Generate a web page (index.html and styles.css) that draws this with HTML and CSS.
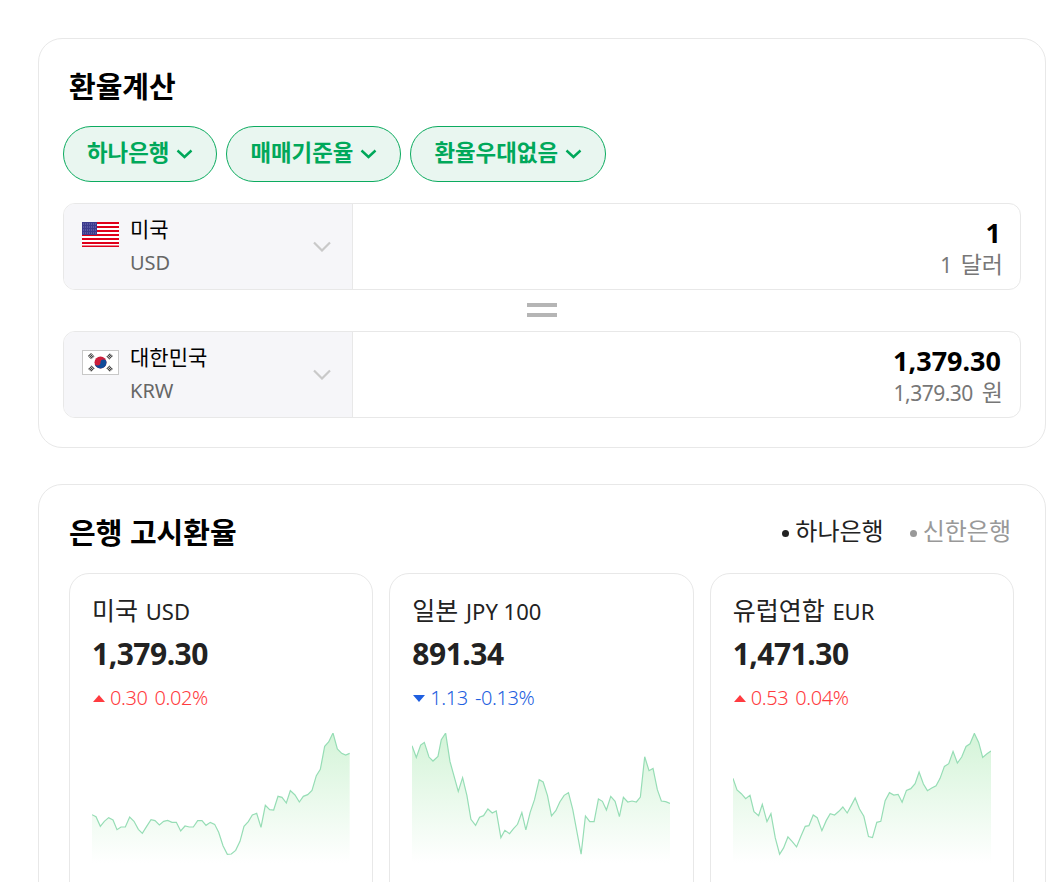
FILE: index.html
```html
<!DOCTYPE html>
<html lang="ko">
<head>
  <meta charset="UTF-8">
  <meta name="viewport" content="width=device-width, initial-scale=1.0">
  <title>환율계산</title>
  <link rel="stylesheet" href="styles.css">
</head>
<body>

  <svg class="defs" width="0" height="0" aria-hidden="true">
    <defs>
      <linearGradient id="spark-fill" x1="0" y1="0" x2="0" y2="1">
        <stop offset="0" stop-color="#d4f4d8"/>
        <stop offset="1" stop-color="#ffffff"/>
      </linearGradient>
    </defs>
  </svg>

  <!-- Calculator -->
  <section class="card calc">
    <h2 class="title calc-title">환율계산</h2>

    <div class="pills">
      <button class="pill">하나은행
        <svg class="pill-arrow" viewBox="0 0 17 10"><path d="M1.500 1.500 8.500 8l7-6.500"/></svg>
      </button>
      <button class="pill">매매기준율
        <svg class="pill-arrow" viewBox="0 0 17 10"><path d="M1.500 1.500 8.500 8l7-6.500"/></svg>
      </button>
      <button class="pill">환율우대없음
        <svg class="pill-arrow" viewBox="0 0 17 10"><path d="M1.500 1.500 8.500 8l7-6.500"/></svg>
      </button>
    </div>

    <div class="cur-row">
      <div class="cur-select">
        <svg class="flag" viewBox="0 0 37 25">
          <rect width="37" height="25" fill="#fff"/>
          <path d="M0 1h37M0 5h37M0 9h37M0 13h37M0 17h37M0 21h37M0 24.500h37" stroke="#e0001b" stroke-width="2"/>
          <rect width="15" height="13" fill="#3c3b8e"/>
          <path d="M1 2h13M1 5h13M1 8h13M1 11h13" stroke="#7b7ab8" stroke-width="1" stroke-dasharray="1 1"/>
        </svg>
        <div class="cur-name">
          <div class="cur-country">미국</div>
          <div class="cur-code">USD</div>
        </div>
        <svg class="cur-arrow" viewBox="0 0 18 11"><path d="M1 1.500l8 8 8-8"/></svg>
      </div>
      <div class="cur-value">
        <div class="cur-amount">1</div>
        <div class="cur-words"><span class="num">1</span> 달러</div>
      </div>
    </div>

    <div class="equals"></div>

    <div class="cur-row">
      <div class="cur-select">
        <svg class="flag" viewBox="0 0 37 25">
          <rect x=".5" y=".5" width="36" height="24" fill="#fff" stroke="#c8c8c8"/>
          <circle cx="18.500" cy="12.500" r="6" fill="#cd1f3c"/>
          <path d="M12.500 12.500a3 3 0 0 0 6 0 3 3 0 0 1 6 0 6 6 0 0 1-12 0z" fill="#0f4a99"/>
          <g fill="none" stroke="#333" stroke-width="4.500" stroke-dasharray="1 .6">
            <path d="M7.500 4.500 11 8M26 8l3.500-3.500M11 17l-3.500 3.500M26 17l3.500 3.500"/>
          </g>
        </svg>
        <div class="cur-name">
          <div class="cur-country">대한민국</div>
          <div class="cur-code">KRW</div>
        </div>
        <svg class="cur-arrow" viewBox="0 0 18 11"><path d="M1 1.500l8 8 8-8"/></svg>
      </div>
      <div class="cur-value">
        <div class="cur-amount">1,379.30</div>
        <div class="cur-words"><span class="num">1,379.30</span> 원</div>
      </div>
    </div>
  </section>

  <!-- Bank rates -->
  <section class="card rates">
    <div class="rates-head">
      <h2 class="title">은행 고시환율</h2>
      <ul class="banks">
        <li class="bank active">하나은행</li>
        <li class="bank">신한은행</li>
      </ul>
    </div>

    <div class="rate-grid">
      <div class="rate-card">
        <div class="rate-name"><span class="ko">미국</span> USD</div>
        <div class="rate-price">1,379.30</div>
        <div class="rate-change up"><span class="tri"></span><span>0.30</span><span>0.02%</span></div>
        <svg class="spark" viewBox="65 40 774 390">
          <polygon class="spark-area" points="65,430 65,285 77,291 90,320 102,305 115,294 128,301 140,330 152,322 165,322 178,292 191,305 204,329 216,341 229,320 242,300 254,303 267,316 280,305 292,302 305,308 318,308 331,334 344,319 357,322 369,322 382,303 395,303 407,317 420,308 433,314 445,338 458,378 471,404 483,403 496,392 509,365 521,320 534,306 546,286 559,281 572,323 585,257 598,270 610,271 623,230 635,233 648,250 660,213 674,226 687,247 699,230 712,225 725,212 738,168 750,149 763,80 775,67 788,40 801,88 814,101 826,106 838,101 838,430"/>
          <polyline class="spark-line" points="65,285 77,291 90,320 102,305 115,294 128,301 140,330 152,322 165,322 178,292 191,305 204,329 216,341 229,320 242,300 254,303 267,316 280,305 292,302 305,308 318,308 331,334 344,319 357,322 369,322 382,303 395,303 407,317 420,308 433,314 445,338 458,378 471,404 483,403 496,392 509,365 521,320 534,306 546,286 559,281 572,323 585,257 598,270 610,271 623,230 635,233 648,250 660,213 674,226 687,247 699,230 712,225 725,212 738,168 750,149 763,80 775,67 788,40 801,88 814,101 826,106 838,101"/>
        </svg>
      </div>

      <div class="rate-card">
        <div class="rate-name"><span class="ko">일본</span> JPY 100</div>
        <div class="rate-price">891.34</div>
        <div class="rate-change down"><span class="tri"></span><span>1.13</span><span>-0.13%</span></div>
        <svg class="spark" viewBox="67 40 775 390">
          <polygon class="spark-area" points="67,430 67,78 80,113 93,76 104,68 118,112 130,124 145,110 155,60 168,40 181,125 206,215 219,174 232,228 244,299 258,317 270,293 282,288 295,268 308,280 320,274 334,354 346,332 360,342 372,327 384,314 397,279 409,331 422,278 435,240 449,180 461,187 474,228 486,289 499,273 511,247 524,227 537,219 550,270 575,404 588,289 601,306 614,306 627,238 639,245 651,271 664,230 677,245 690,291 702,233 715,247 728,244 741,247 753,232 766,111 779,153 791,146 804,210 816,244 829,246 842,251 842,430"/>
          <polyline class="spark-line" points="67,78 80,113 93,76 104,68 118,112 130,124 145,110 155,60 168,40 181,125 206,215 219,174 232,228 244,299 258,317 270,293 282,288 295,268 308,280 320,274 334,354 346,332 360,342 372,327 384,314 397,279 409,331 422,278 435,240 449,180 461,187 474,228 486,289 499,273 511,247 524,227 537,219 550,270 575,404 588,289 601,306 614,306 627,238 639,245 651,271 664,230 677,245 690,291 702,233 715,247 728,244 741,247 753,232 766,111 779,153 791,146 804,210 816,244 829,246 842,251"/>
        </svg>
      </div>

      <div class="rate-card">
        <div class="rate-name"><span class="ko">유럽연합</span> EUR</div>
        <div class="rate-price">1,471.30</div>
        <div class="rate-change up"><span class="tri"></span><span>0.53</span><span>0.04%</span></div>
        <svg class="spark" viewBox="70 40 775 390">
          <polygon class="spark-area" points="70,430 70,176 82,211 95,222 108,237 121,227 133,276 147,288 158,254 172,306 184,282 197,355 210,404 222,385 235,352 248,366 261,382 274,350 287,320 298,318 311,286 323,294 337,333 350,303 362,282 375,286 388,275 400,262 413,280 425,258 437,235 450,268 463,290 477,351 489,354 502,308 514,305 527,243 540,219 553,226 566,224 578,248 591,212 604,207 617,192 629,157 642,193 654,213 667,205 680,198 692,176 705,140 718,132 731,95 744,130 757,112 770,80 782,72 795,41 808,68 820,113 833,102 845,94 845,430"/>
          <polyline class="spark-line" points="70,176 82,211 95,222 108,237 121,227 133,276 147,288 158,254 172,306 184,282 197,355 210,404 222,385 235,352 248,366 261,382 274,350 287,320 298,318 311,286 323,294 337,333 350,303 362,282 375,286 388,275 400,262 413,280 425,258 437,235 450,268 463,290 477,351 489,354 502,308 514,305 527,243 540,219 553,226 566,224 578,248 591,212 604,207 617,192 629,157 642,193 654,213 667,205 680,198 692,176 705,140 718,132 731,95 744,130 757,112 770,80 782,72 795,41 808,68 820,113 833,102 845,94"/>
        </svg>
      </div>
    </div>
  </section>

</body>
</html>
```

FILE: styles.css
```css
html, body {
  height: 882px;
  overflow: hidden;
}

body {
  margin: 0;
  padding: 38px 8px 0 38px;
  box-sizing: border-box;
  background: #fff;
  color: #000;
  font-family: "Noto Sans", "Noto Sans CJK KR", sans-serif;
}

.defs {
  position: absolute;
}

.card {
  box-sizing: border-box;
  border: 1px solid #e8e8e8;
  border-radius: 24px;
  background: #fff;
}

.title {
  margin: 0;
  font-size: 29px;
  line-height: 40px;
  font-weight: 700;
}

/* Calculator */
.calc {
  height: 410px;
  padding: 28px 24px 0;
  margin-bottom: 36px;
}

.calc-title {
  padding-left: 6px;
}

.pills {
  display: flex;
  gap: 9px;
  margin-top: 19px;
  margin-bottom: 21px;
}

.pill {
  display: flex;
  align-items: center;
  gap: 7px;
  height: 56px;
  padding: 0 23px 5px;
  border: 1px solid #0cab5f;
  border-radius: 28px;
  background: #e9f6f0;
  color: #00a85a;
  font-family: inherit;
  font-size: 22.400px;
  font-weight: 700;
}

.pill-arrow {
  width: 17px;
  height: 10px;
  margin-top: 5px;
  fill: none;
  stroke: #00a85a;
  stroke-width: 2.400;
}

.cur-row {
  display: flex;
  height: 87px;
  box-sizing: border-box;
  border: 1px solid #e8e8e8;
  border-radius: 12px;
  overflow: hidden;
}

.cur-select {
  display: flex;
  width: 289px;
  box-sizing: border-box;
  padding: 18px 21px 0 18px;
  border-right: 1px solid #e8e8e8;
  background: #f6f6f9;
}

.flag {
  width: 37px;
  height: 25px;
  flex: none;
  margin-right: 11px;
}

.cur-name {
  flex: 1;
  margin-top: -9px;
}

.cur-country {
  font-size: 21px;
  line-height: 33px;
}

.cur-code {
  font-size: 20px;
  line-height: 33px;
  color: #666;
}

.cur-arrow {
  width: 18px;
  height: 11px;
  margin-top: 19px;
  fill: none;
  stroke: #c9c9c9;
  stroke-width: 2.200;
}

.cur-value {
  flex: 1;
  padding: 13px 17px 0 0;
  text-align: right;
}

.cur-amount {
  margin-right: 2px;
  font-size: 27px;
  line-height: 32px;
  font-weight: 700;
}

.cur-words {
  margin-top: 1px;
  font-size: 23px;
  line-height: 29px;
  color: #777;
}

.cur-words .num {
  margin-right: 3px;
  font-size: 21px;
  letter-spacing: -.5px;
}

.equals {
  width: 30px;
  height: 14px;
  margin: 13px auto 14px;
  box-sizing: border-box;
  border-top: 4px solid #b5b5b5;
  border-bottom: 4px solid #b5b5b5;
}

/* Bank rates */
.rates {
  height: 500px;
  padding: 28px 31px 0 30px;
}

.rates-head {
  display: flex;
  align-items: center;
  justify-content: space-between;
  margin-bottom: 20px;
  padding-right: 3px;
}

.banks {
  display: flex;
  gap: 26px;
  margin: 0;
  padding: 0 0 5px;
  list-style: none;
  font-size: 24px;
  line-height: 34px;
  color: #999;
}

.bank::before {
  content: "";
  display: inline-block;
  width: 7px;
  height: 7px;
  margin-right: 6px;
  border-radius: 50%;
  background: currentColor;
  vertical-align: middle;
}

.bank.active {
  color: #222;
}

.rate-grid {
  display: grid;
  grid-template-columns: repeat(3, 1fr);
  gap: 16px;
}

.rate-card {
  box-sizing: border-box;
  height: 400px;
  padding: 19px 22px;
  border: 1px solid #e8e8e8;
  border-radius: 20px;
}

.rate-name {
  font-size: 22px;
  line-height: 34px;
  color: #222;
}

.rate-name .ko {
  font-size: 25px;
  margin-right: 2px;
}

.rate-price {
  margin-top: 5px;
  font-size: 30px;
  line-height: 42px;
  font-weight: 700;
  letter-spacing: -.5px;
  color: #222;
}

.rate-change {
  display: flex;
  align-items: center;
  gap: 7px;
  margin-top: 8px;
  font-size: 20px;
  line-height: 30px;
  font-weight: 300;
  letter-spacing: -.4px;
}

.rate-change.up {
  color: #ff3b40;
}

.rate-change.down {
  color: #1f5fe0;
}

.tri {
  width: 0;
  height: 0;
  margin-left: 1px;
  margin-right: -2px;
  border-left: 6px solid transparent;
  border-right: 6px solid transparent;
}

.up .tri {
  border-bottom: 7px solid #ff3b40;
}

.down .tri {
  border-top: 7px solid #1f5fe0;
}

.spark {
  display: block;
  width: 258px;
  height: 130px;
  margin-top: 20px;
}

.spark-area {
  fill: url(#spark-fill);
}

.spark-line {
  fill: none;
  stroke: #96ddb5;
  stroke-width: 3.600;
}
```
